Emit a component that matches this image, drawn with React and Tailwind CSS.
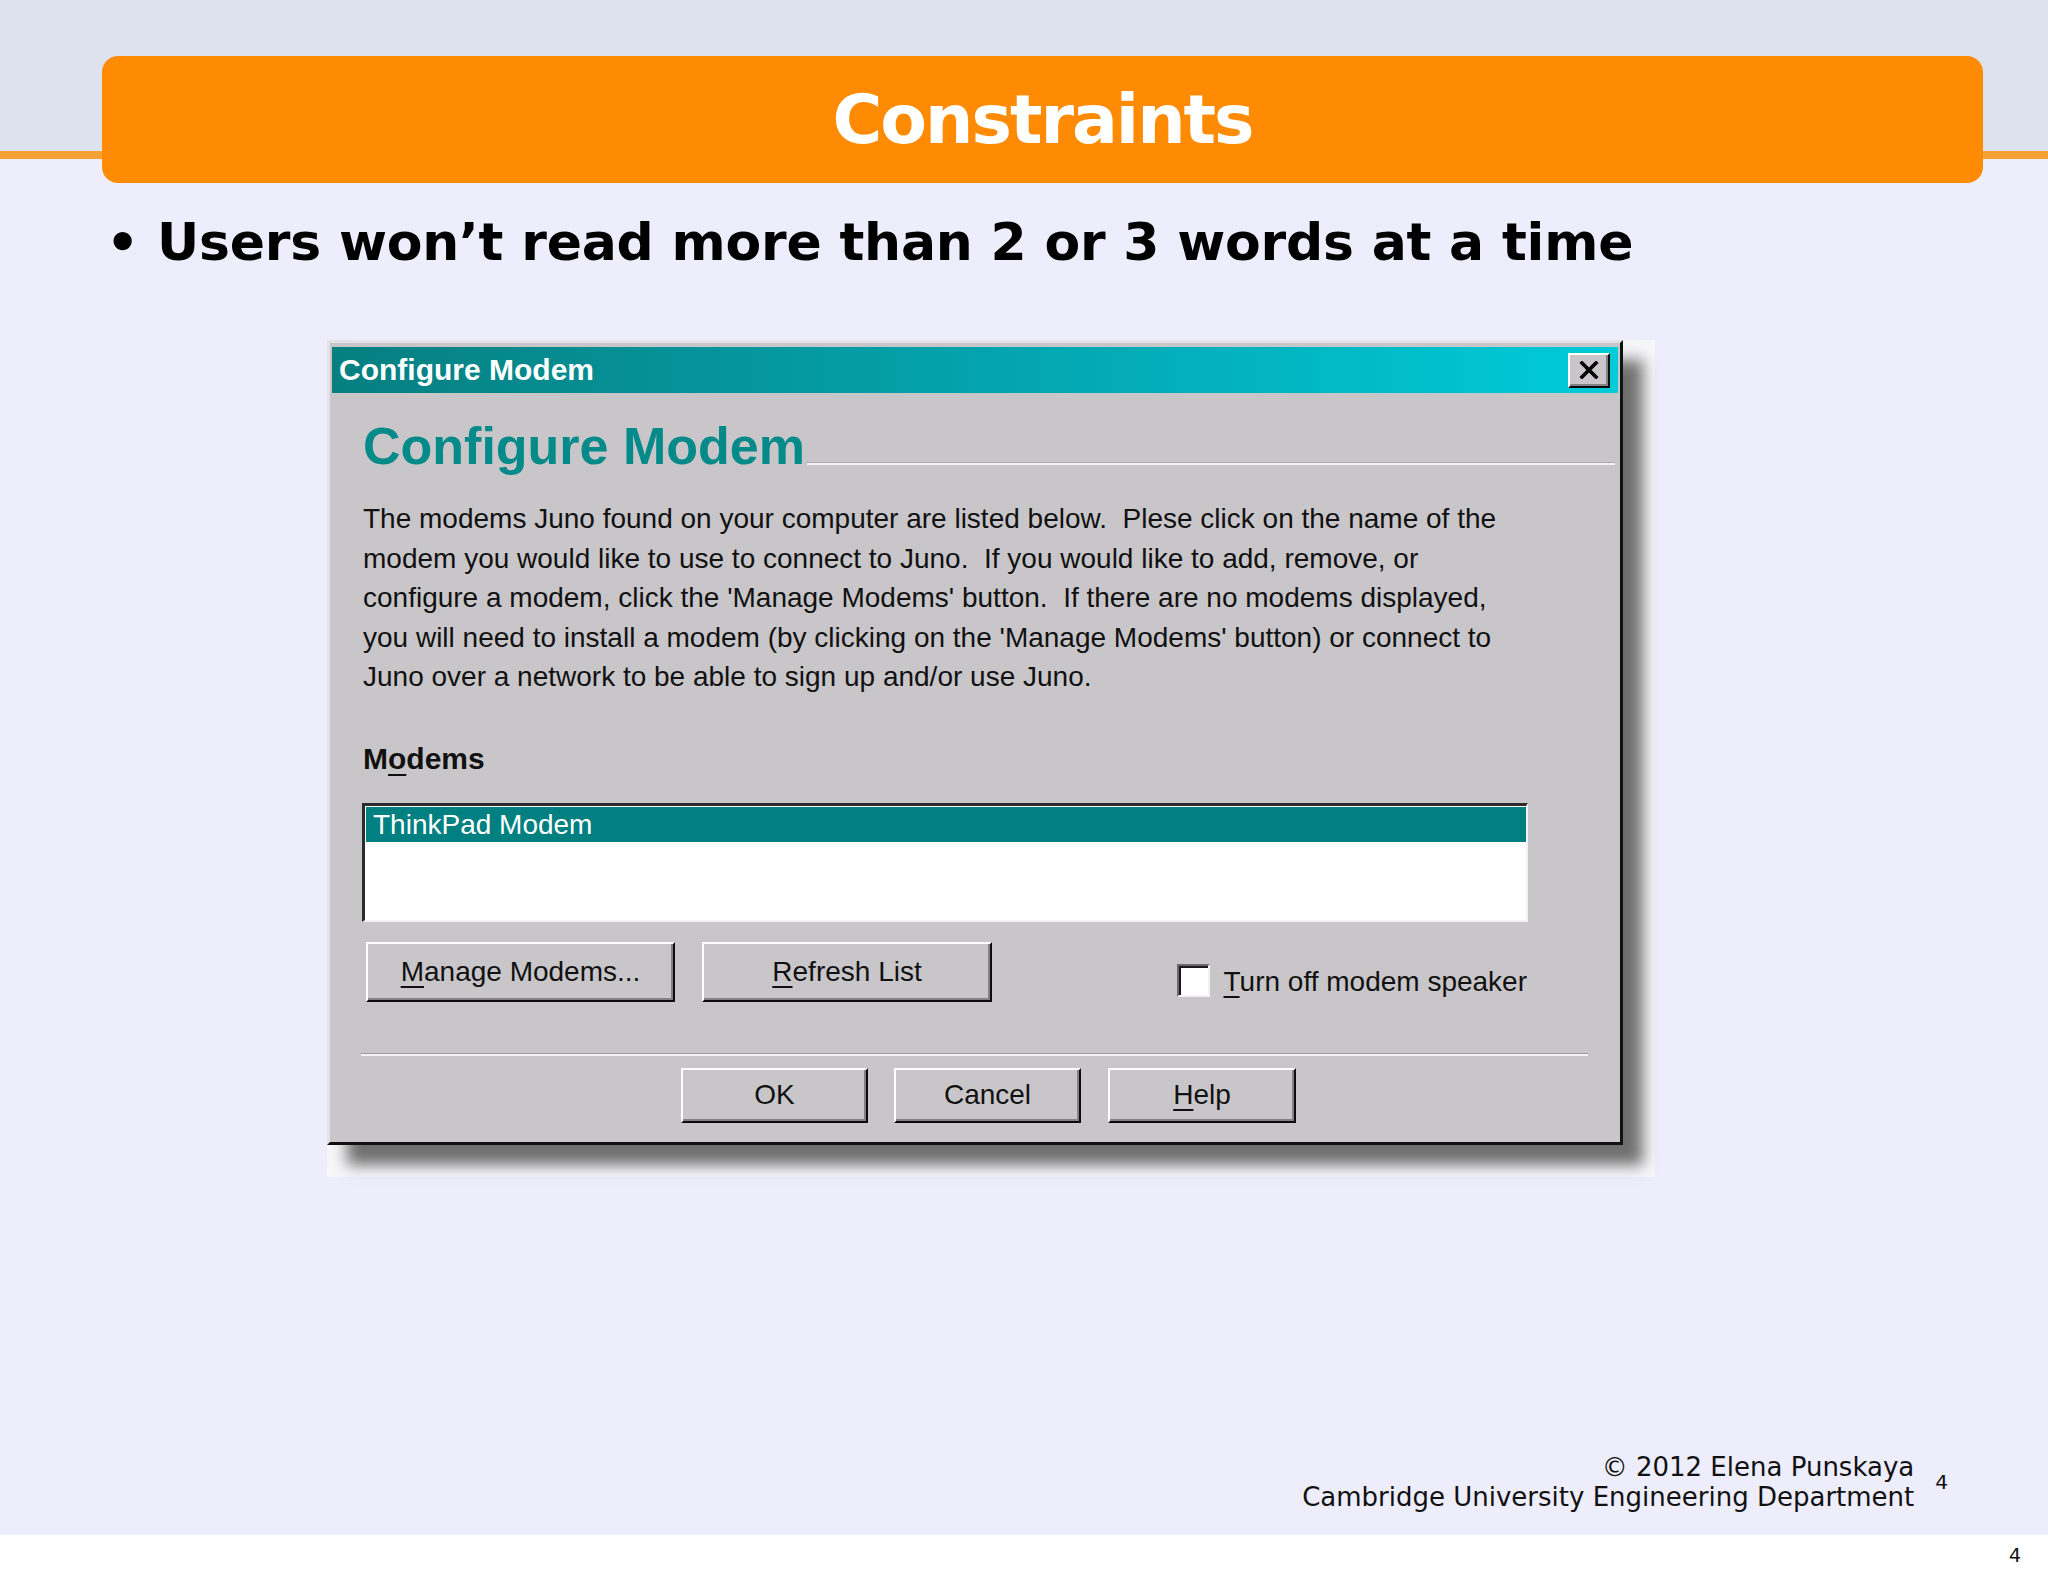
import React from 'react'

const paragraph = [
  "The modems Juno found on your computer are listed below.  Plese click on the name of the",
  "modem you would like to use to connect to Juno.  If you would like to add, remove, or",
  "configure a modem, click the 'Manage Modems' button.  If there are no modems displayed,",
  "you will need to install a modem (by clicking on the 'Manage Modems' button) or connect to",
  "Juno over a network to be able to sign up and/or use Juno.",
]

// mnemonic underline, like the win98 accelerator keys
const U = ({ children }) => (
  <span className="underline decoration-2 underline-offset-[5px]">{children}</span>
)

const WinButton = ({ className, children }) => (
  <div className={`flex items-center justify-center border-2 border-t-white border-l-white border-r-[#0b0b0b] border-b-[#0b0b0b] bg-[#c9c6ca] shadow-[inset_-2px_-2px_0_#858286] ${className}`}>
    {children}
  </div>
)

const Dialog = () => {
  return (
    <div className="w-[1296px] h-[805px] flex flex-col bg-[#c9c6ca] border-t-[3px] border-l-[3px] border-t-[#e4e2e6] border-l-[#e4e2e6] border-r-[3px] border-b-[3px] border-r-[#111] border-b-[#111] pt-[4px] pl-[2px] pr-[2px] shadow-[20px_20px_14px_rgba(0,0,0,0.55)] [font-family:'Liberation_Sans',Arial,sans-serif] text-[#111]">
      {/* Title bar */}
      <div className="h-[46px] flex items-center justify-between pl-[7px] pr-[8px] bg-gradient-to-r from-[#067f80] via-[#04a3ad] to-[#00cbd9]">
        <span className="text-white font-bold text-[30px] leading-none">Configure Modem</span>
        <WinButton className="w-[42px] h-[35px]">
          <svg width="20" height="18" viewBox="0 0 20 18">
            <path d="M3 2 L17 16 M17 2 L3 16" stroke="#000" strokeWidth="3.6" strokeLinecap="square" />
          </svg>
        </WinButton>
      </div>

      <div className="flex flex-col pl-[31px]">
        <div className="flex items-end mt-[27px] pr-[3px]">
          <h1 className="text-[52px] leading-none font-bold text-[#058a8a]">Configure Modem</h1>
          <div className="flex-1 h-[3px] mb-[7px] ml-[2px] bg-[#f2f0f4] border-t border-[#b0adb2]" />
        </div>

        <div className="mt-[27px] text-[28px] leading-[39.5px]">
          {paragraph.map((line, i) => (
            <div key={i} className="whitespace-pre">{line}</div>
          ))}
        </div>

        <div className="mt-[47px] text-[30px] leading-none font-bold">M<U>o</U>dems</div>

        <div className="mt-[29px] -ml-[1px] w-[1166px] h-[119px] bg-white border-t-[3px] border-l-[3px] border-t-[#2b2b2b] border-l-[#2b2b2b] border-b-2 border-r-2 border-b-[#f3f2f4] border-r-[#f3f2f4] pt-[1px] pl-[1px]">
          <div className="h-[35px] bg-[#008080] text-white text-[28px] leading-[35px] pl-[7px]">ThinkPad Modem</div>
        </div>

        <div className="flex w-[1166px] mt-[20px] text-[28px] leading-none">
          <WinButton className="ml-[3px] w-[309px] h-[60px]"><span><U>M</U>anage Modems...</span></WinButton>
          <WinButton className="ml-[27px] w-[290px] h-[60px]"><span><U>R</U>efresh List</span></WinButton>
          <div className="ml-auto mt-[22px] h-[34px] flex items-center">
            <div className="w-[33px] h-[33px] bg-white border-t-2 border-l-2 border-t-[#6b686c] border-l-[#6b686c] border-b-2 border-r-2 border-b-[#f3f2f4] border-r-[#f3f2f4] shadow-[inset_2px_2px_0_#1a1a1a]" />
            <span className="ml-[14px] pr-[2px] pt-[3px]"><U>T</U>urn off modem speaker</span>
          </div>
        </div>

        <div className="mt-[51px] -ml-[2px] w-[1227px] h-[3px] border-t border-[#9d9a9f] bg-[#f4f3f5]" />

        <div className="flex mt-[12px] ml-[318px] text-[28px] leading-none">
          <WinButton className="w-[187px] h-[55px]">OK</WinButton>
          <WinButton className="ml-[26px] w-[187px] h-[55px]">Cancel</WinButton>
          <WinButton className="ml-[27px] w-[188px] h-[55px]"><span><U>H</U>elp</span></WinButton>
        </div>
      </div>
    </div>
  )
}

export default function App() {
  return (
    <div className="w-[2048px] h-[1576px] flex flex-col overflow-hidden bg-[#ededfc] [font-family:'DejaVu_Sans',Verdana,sans-serif]">
      {/* Header band + banner */}
      <div className="pt-[56px] bg-[linear-gradient(to_bottom,#dde2ec_0px,#dde2ec_151px,#f8a133_151px,#f8a133_159px,#ededfc_159px)]">
        <div className="ml-[102px] w-[1881px] h-[127px] rounded-[16px] bg-[#ff8b04] flex items-center justify-center">
          <h1 className="text-white font-bold text-[68px] leading-none tracking-[-2px]">Constraints</h1>
        </div>
      </div>

      <div className="mt-[33px] pl-[106px] text-[52px] leading-none font-bold text-black tracking-[-0.2px]">
        • Users won’t read more than 2 or 3 words at a time
      </div>

      <div className="mt-[72px] ml-[327px] w-[1328px] h-[837px] bg-[#f7f7f9]">
        <Dialog />
      </div>

      {/* Footer */}
      <div className="mt-auto flex items-center justify-end pr-[100px] pb-[23px]">
        <div className="text-right text-[26px] leading-[30px] text-[#111]">
          <div>© 2012 Elena Punskaya</div>
          <div>Cambridge University Engineering Department</div>
        </div>
        <span className="ml-[21px] text-[20px] leading-none text-[#111]">4</span>
      </div>
      <div className="h-[41px] bg-white flex items-center justify-end pr-[27px] text-[19px] text-[#111]">4</div>
    </div>
  )
}
